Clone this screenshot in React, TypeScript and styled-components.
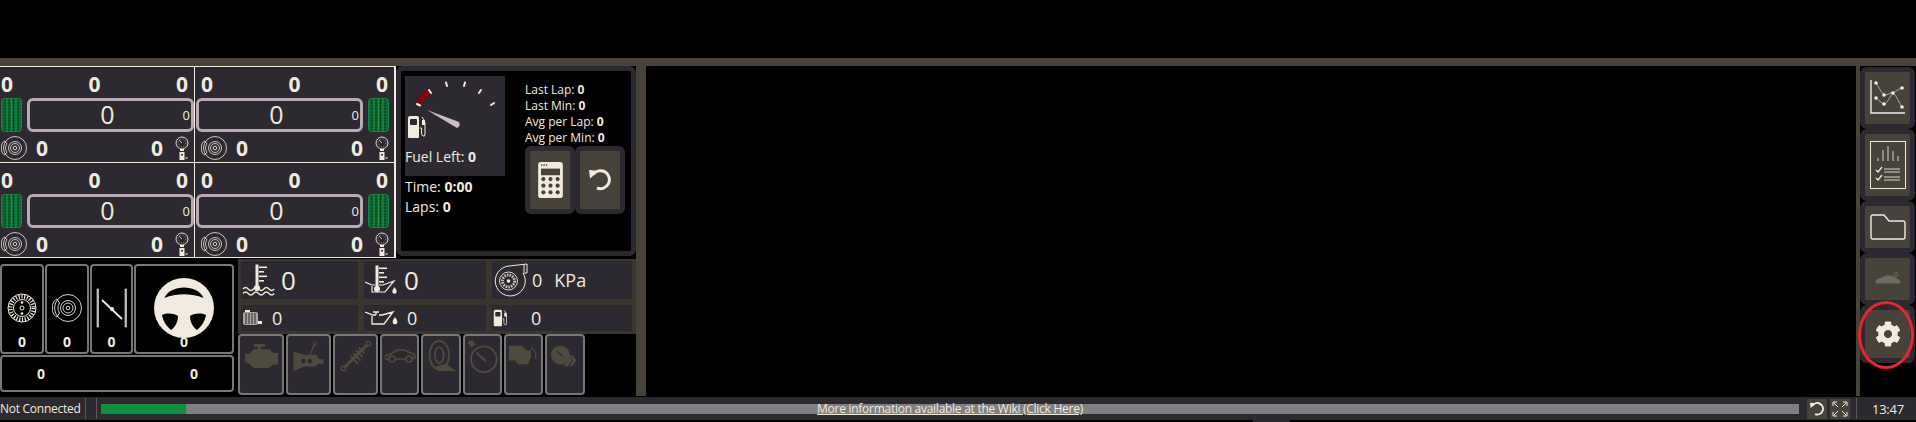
import React from "react";
import styled, { createGlobalStyle } from "styled-components";
import { FaCog } from "react-icons/fa";

const cream = "#f0eadf";
const panel = "#2c2a30";
const khaki = "#47433a";
const dim = "#4f4a3e";

const GlobalStyle = createGlobalStyle`
  html, body { margin: 0; padding: 0; background: #000; overflow: hidden; }
  body { font-family: "Open Sans", "Noto Sans", sans-serif; color: ${cream}; }
`;

/* ---------- icons ---------- */

const Tyre = () => (
  <svg width="21" height="34" viewBox="0 0 21 34">
    <rect x="0.5" y="0.5" width="20" height="33" rx="3" fill="#0c6b32" stroke="#0f8a3e" />
    {[4, 8, 12.5, 17].map((x) => (
      <line key={x} x1={x} y1="1" x2={x} y2="33" stroke="#1d2a22" strokeWidth="1" strokeDasharray="2 1" />
    ))}
    {[6, 10.5, 15].map((x) => (
      <line key={x} x1={x} y1="1" x2={x} y2="33" stroke="#159447" strokeWidth="1" />
    ))}
  </svg>
);

const BrakeDisc = () => (
  <svg width="26" height="24" viewBox="0 0 26 24" fill="none" stroke={cream}>
    <circle cx="14" cy="12" r="11.5" strokeWidth="0.8" />
    <circle cx="14" cy="12" r="6.5" strokeWidth="0.8" />
    <circle cx="14" cy="12" r="4.5" strokeWidth="0.8" />
    <circle cx="14" cy="12" r="1.8" strokeWidth="0.9" />
    <path d="M4 5 C1 6 0 9 0.5 12 C0 15 1 18 4 19 L6 16 C4 14 4 10 6 8 Z" strokeWidth="0.8" />
  </svg>
);

const PressureGauge = () => (
  <svg width="14" height="24" viewBox="0 0 14 24" fill="none">
    <circle cx="7" cy="7" r="6" stroke={cream} strokeWidth="0.9" />
    <path d="M7 7 L4 4" stroke={cream} strokeWidth="0.8" />
    <circle cx="7" cy="7" r="4" stroke="#8d8980" strokeWidth="1" strokeDasharray="1 1" />
    <rect x="5" y="13" width="4" height="2" fill={cream} />
    <rect x="4.5" y="16" width="5" height="8" fill={cream} />
    <rect x="6" y="18" width="2" height="1.5" fill={panel} />
    <rect x="10.5" y="21" width="2" height="2" fill="#a9a59b" />
  </svg>
);

const FuelPump = ({ size = 1 }: { size?: number }) => (
  <svg width={20 * size} height={24 * size} viewBox="0 0 20 24">
    <path d="M1 3 Q1 1 3 1 H10 Q12 1 12 3 V22 Q12 23 11 23 H2 Q1 23 1 22 Z" fill={cream} />
    <rect x="3" y="4" width="7" height="6" rx="1" fill={panel} />
    <path d="M15 2 L17 5 L18 8 V19 Q18 22 16 21 Q14.5 20 14.5 18 V13 H12.5" fill="none" stroke={cream} strokeWidth="1" />
    <rect x="15" y="5" width="3" height="5" fill={cream} />
  </svg>
);

const FuelDial = () => (
  <svg width="100" height="71" viewBox="0 0 100 71">
    <path d="M13 27 A 36 36 0 0 1 25 15" fill="none" stroke="#8b0000" strokeWidth="5" />
    <g stroke={cream} strokeWidth="2" strokeLinecap="round">
      <line x1="12" y1="28" x2="15" y2="29.5" />
      <line x1="24" y1="14" x2="26" y2="17" />
      <line x1="41" y1="6.5" x2="42" y2="10" />
      <line x1="60" y1="6.5" x2="59" y2="10" />
      <line x1="76" y1="14" x2="74" y2="17" />
      <line x1="89" y1="27" x2="86" y2="29" />
    </g>
    <path d="M22 34 L54 46 Q56 50 52 52 Z" fill="#cdbdc7" />
    <g transform="translate(2 39)"><FuelPump /></g>
  </svg>
);

const Calculator = () => (
  <svg width="27" height="38" viewBox="0 0 28 40">
    <rect x="1" y="1" width="26" height="38" rx="3" fill={cream} />
    <rect x="4" y="8" width="20" height="7" fill={khaki} />
    {[4, 6.5, 9].map((x) => (
      <rect key={x} x={x} y="3.5" width="1.5" height="1.5" fill={khaki} />
    ))}
    {[19, 26, 33].map((y) =>
      [6.5, 14, 21.5].map((x) => <circle key={`${x}-${y}`} cx={x} cy={y} r="2.2" fill={khaki} />)
    )}
  </svg>
);

const Undo = ({ w = 22 }: { w?: number }) => (
  <svg width={w} height={w} viewBox="0 0 22 22" fill="none">
    <path d="M4 5.5 A 9 9 0 1 1 8 19" stroke={cream} strokeWidth="3" />
    <path d="M0 1 L10 2 L1 9.5 Z" fill={cream} />
  </svg>
);

const VentedDisc = () => (
  <svg width="30" height="30" viewBox="0 0 30 30" fill="none" stroke={cream}>
    <circle cx="15" cy="15" r="14" strokeWidth="1" />
    <circle cx="15" cy="15" r="11.5" strokeWidth="4" strokeDasharray="1.2 1.6" />
    <circle cx="15" cy="15" r="8.5" strokeWidth="1" />
    <circle cx="15" cy="15" r="2" strokeWidth="1" />
    <circle cx="15" cy="9.5" r="0.9" fill={cream} />
    <circle cx="15" cy="20.5" r="0.9" fill={cream} />
  </svg>
);

const CaliperDisc = () => (
  <svg width="30" height="30" viewBox="0 0 30 30" fill="none" stroke={cream}>
    <circle cx="16" cy="15" r="13.5" strokeWidth="0.9" />
    <circle cx="16" cy="15" r="7.5" strokeWidth="0.9" />
    <circle cx="16" cy="15" r="5" strokeWidth="0.9" />
    <circle cx="16" cy="15" r="1.8" strokeWidth="0.9" />
    <path d="M5 6 C1 8 0 12 0.5 15 C0 18 1 22 5 24 L7.5 20 C5.5 17 5.5 13 7.5 10 Z" strokeWidth="0.9" />
  </svg>
);

const Throttle = () => (
  <svg width="32" height="40" viewBox="0 0 32 40" fill="none" stroke={cream}>
    <rect x="1" y="1" width="1.6" height="38" fill="#a9a59b" strokeWidth="0.6" />
    <rect x="29" y="1" width="1.6" height="38" fill="#a9a59b" strokeWidth="0.6" />
    <path d="M6 12 L26 31" strokeWidth="1.8" />
    <circle cx="16" cy="21" r="2" fill={cream} strokeWidth="0" />
  </svg>
);

const SteeringWheel = () => (
  <svg width="60" height="60" viewBox="0 0 60 60">
    <circle cx="30" cy="30" r="30" fill={cream} />
    <path d="M10.5 20 C16 6 44 6 49.5 20 C38 15 22 15 10.5 20 Z" fill="#000" />
    <path d="M8 37 C14 34 21 36 24 38 C24 45 20 50 17 52 C12 48 9 43 8 37 Z" fill="#000" />
    <path d="M52 37 C46 34 39 36 36 38 C36 45 40 50 43 52 C48 48 51 43 52 37 Z" fill="#000" />
  </svg>
);

const Waves = ({ y }: { y: number }) => (
  <>
    {[0, 4.5].map((d) => (
      <path
        key={d}
        d={`M1 ${y + d} q2.5 -3 5.2 0 t5.2 0 t5.2 0 t5.2 0 t5.2 0 t5.2 0`}
        fill="none"
        stroke={cream}
        strokeWidth="1.4"
      />
    ))}
  </>
);

const Thermo = ({ x }: { x: number }) => (
  <g>
    <rect x={x - 1.5} y="0.5" width="3" height="22" fill={cream} />
    <circle cx={x} cy="24" r="3" fill={cream} />
    {[2.5, 7, 11.5, 16].map((y, i) => (
      <rect key={y} x={x + 2} y={y} width={i % 2 ? 5 : 8} height="1.6" fill={cream} />
    ))}
  </g>
);

const WaterTemp = () => (
  <svg width="33" height="33" viewBox="0 0 33 33">
    <Thermo x={15} />
    <Waves y={25} />
  </svg>
);

const OilTemp = () => (
  <svg width="33" height="30" viewBox="0 0 33 30">
    <Thermo x={12} />
    <path
      d="M0 17 L7 20 H10 M14 20 H18 L29 16 L20 27 H7 V21"
      fill="none"
      stroke={cream}
      strokeWidth="1.2"
    />
    <path d="M29.5 22 q2.2 3 2.2 4.5 a2.2 2.2 0 0 1 -4.4 0 q0 -1.5 2.2 -4.5 Z" fill={cream} />
  </svg>
);

const Turbo = () => (
  <svg width="36" height="34" viewBox="0 0 36 34" fill="none" stroke={cream}>
    <path d="M34 1 V10 H30 A15 15 0 1 1 16 3 Z" strokeWidth="1" />
    <path d="M31 1.5 V9" strokeWidth="1" />
    <circle cx="15.5" cy="18" r="9" strokeWidth="0.9" />
    <circle cx="15.5" cy="18" r="6" strokeWidth="2.8" strokeDasharray="1.6 1" stroke="#c7c2b7" />
    <circle cx="15.5" cy="18" r="1.8" fill={cream} strokeWidth="0" />
  </svg>
);

const Radiator = () => (
  <svg width="21" height="18" viewBox="0 0 21 18">
    <rect x="1" y="3" width="15" height="13" rx="2" fill="#a9a59b" />
    {[3.5, 6.5, 9.5, 12.5].map((x) => (
      <rect key={x} x={x} y="4" width="1" height="11" fill={panel} />
    ))}
    <rect x="3" y="1" width="5" height="2" fill={cream} />
    <path d="M16 12 H20 V15 H16 Z" fill={cream} />
  </svg>
);

const OilCan = () => (
  <svg width="33" height="16" viewBox="0 0 33 16">
    <path
      d="M0 2 L8 5 H11 M11 5 V2 M8 2 H14 M14 5 H17 L28 2 L19 14 H7 V6"
      fill="none"
      stroke={cream}
      strokeWidth="1.3"
    />
    <path d="M30 7 q2.4 3.2 2.4 5 a2.4 2.4 0 0 1 -4.8 0 q0 -1.8 2.4 -5 Z" fill={cream} />
  </svg>
);

const icons = [
  <svg key="engine" width="33" height="25" viewBox="0 0 33 28" preserveAspectRatio="none">
    <path d="M9 0 H20 V3 H16 V6 H25 L28 10 H33 V23 H28 L24 27 H9 L3 21 H0 V11 H4 L9 6 H13 V3 H9 Z" fill={dim} />
  </svg>,
  <svg key="gearbox" width="33" height="31" viewBox="0 0 33 34">
    <path d="M0 12 L12 15 H25 L28 20 H33 V25 H28 L24 28 H12 L0 33 Z" fill={dim} />
    <path d="M18 15 L23 4" stroke={dim} strokeWidth="1.5" />
    <circle cx="24" cy="2.5" r="2" fill="none" stroke={dim} />
    <circle cx="11" cy="22" r="2.6" fill={panel} />
    <circle cx="18" cy="22" r="2.6" fill={panel} />
  </svg>,
  <svg key="shock" width="32" height="32" viewBox="0 0 34 34" stroke={dim} fill="none">
    <path d="M5 29 L29 5" strokeWidth="3" />
    <path d="M11 17 L19 25 M14 14 L22 22 M17 11 L24 18 M20 8 L26 14" strokeWidth="2" />
    <circle cx="4" cy="30" r="2.5" strokeWidth="1.5" />
    <circle cx="30" cy="4" r="2.5" strokeWidth="1.5" />
  </svg>,
  <svg key="car" width="32" height="14" viewBox="0 0 32 14" fill="none" stroke={dim}>
    <path d="M1 8 Q1 6 7 5 L13 1 H20 L29 5 Q32 6 31 9 H28 M22 10 H11 M5 10 H1" strokeWidth="1.6" />
    <circle cx="8" cy="10" r="3" strokeWidth="1.5" />
    <circle cx="25" cy="10" r="3" strokeWidth="1.5" />
  </svg>,
  <svg key="tyre" width="33" height="32" viewBox="0 0 33 36" fill="none" stroke={dim}>
    <ellipse cx="14" cy="17" rx="11" ry="16" strokeWidth="2" />
    <ellipse cx="14" cy="17" rx="5" ry="9" strokeWidth="2" />
    <path d="M7 31 Q18 27 22 27 L33 35 H14 Z" fill={dim} stroke="none" />
  </svg>,
  <svg key="timer" width="31" height="33" viewBox="0 0 33 36" fill="none" stroke={dim}>
    <circle cx="18" cy="21" r="14" strokeWidth="2" />
    <path d="M10 14 L20 23" strokeWidth="2.5" />
    <path d="M0 3 L5 0 L9 5 L5 8 Z" fill={dim} stroke="none" />
  </svg>,
  <svg key="turn" width="32" height="24" viewBox="0 0 33 26">
    <path d="M0 2 H14 L19 7 H24 V14 L21 22 H10 L7 18 H0 Z" fill={dim} />
    <path d="M24 4 Q31 8 29 16" fill="none" stroke={dim} strokeWidth="1.3" />
  </svg>,
  <svg key="boost" width="32" height="22" viewBox="0 0 33 26">
    <circle cx="11" cy="12" r="11" fill={dim} />
    <path d="M7 7 L14 14" stroke={panel} strokeWidth="1.5" />
    <path d="M15 12 H20 L25 18 L20 25 H15 L19 18 Z M21 12 H25 L30 18 L25 25 H22 L26 18 Z" fill={dim} />
  </svg>,
];

/* ---------- layout ---------- */

const Page = styled.div`
  width: 1916px;
  height: 422px;
  background: #000;
  display: flex;
  flex-direction: column;
  overflow: hidden;
`;

const TopSpace = styled.div`
  height: 58px;
  flex: none;
`;

const Divider = styled.div`
  height: 8px;
  flex: none;
  background: ${khaki};
`;

const Body = styled.div`
  height: 330px;
  flex: none;
  display: flex;
`;

const LeftColumn = styled.div`
  width: 636px;
  flex: none;
  display: flex;
  flex-direction: column;
`;

const TopPanels = styled.div`
  display: flex;
  height: 192px;
  flex: none;
`;

const WheelGrid = styled.div`
  width: 396px;
  flex: none;
  display: grid;
  grid-template-columns: 195px 200px;
  grid-template-rows: 96px 96px;
  overflow: hidden;
  background: ${cream};
  border-right: 1px solid ${cream};
  box-sizing: border-box;
`;

const WheelCell = styled.div`
  background: ${panel};
  border-top: 1px solid ${cream};
  border-right: 1px solid ${cream};
  box-sizing: border-box;
  display: flex;
  flex-direction: column;
  width: 200px;
  &:nth-child(odd) {
    margin-left: -5px;
  }
  &:nth-child(even) {
    border-right: none;
    width: 199px;
  }
  &:nth-child(n + 3) {
    border-bottom: 1px solid ${cream};
  }
`;

const BigRow = styled.div`
  height: 31px;
  flex: none;
  display: flex;
  justify-content: space-between;
  align-items: flex-start;
  padding: 0 6px;
  font-size: 21px;
  font-weight: 700;
  line-height: 34px;
`;

const MidRow = styled.div<{ $mirror?: boolean }>`
  display: flex;
  flex-direction: ${(p) => (p.$mirror ? "row-reverse" : "row")};
  align-items: center;
  padding: ${(p) => (p.$mirror ? "0 5px 0 1px" : "0 0 0 6px")};
  gap: 5px;
  height: 34px;
  flex: none;
`;

const TempBar = styled.div`
  flex: 1;
  height: 34px;
  box-sizing: border-box;
  border: 3px solid #b9a9b5;
  border-radius: 6px;
  position: relative;
  font-size: 25px;
  line-height: 27px;
  text-align: center;
  padding-right: 6px;
`;

const SmallValue = styled.span`
  position: absolute;
  right: 1px;
  top: 0;
  font-size: 13px;
  line-height: 28px;
`;

const BrakeRow = styled.div`
  display: flex;
  align-items: center;
  height: 26px;
  flex: none;
  margin-top: 3px;
  padding: 0 5px 0 6px;
  font-size: 21px;
  font-weight: 700;
  line-height: 26px;
`;

const BrakeValue = styled.span<{ $width: number }>`
  width: ${(p) => p.$width}px;
  text-align: center;
  flex: none;
  margin-right: auto;
  &:first-of-type {
    margin-left: 8px;
  }
  &:last-of-type {
    margin-right: 11px;
  }
`;

const FuelPanel = styled.div`
  flex: 1;
  border: 5px solid ${panel};
  border-radius: 7px;
  margin-bottom: 2px;
  box-sizing: border-box;
  display: flex;
  padding: 5px 5px 0 4px;
  gap: 20px;
`;

const FuelLeftColumn = styled.div`
  width: 100px;
  flex: none;
`;

const FuelGauge = styled.div`
  width: 100px;
  height: 100px;
  background: ${panel};
  font-size: 14px;
  line-height: 20px;
  svg {
    display: block;
  }
`;

const Info = styled.div`
  font-size: 14px;
  line-height: 20px;
  margin-top: 1px;
`;

const FuelRightColumn = styled.div`
  flex: 1;
  font-size: 12px;
  line-height: 16px;
  padding-top: 6px;
`;

const FuelButtons = styled.div`
  display: flex;
`;

const FuelButton = styled.div`
  width: 50px;
  height: 68px;
  box-sizing: border-box;
  border: 5px solid ${panel};
  border-radius: 6px;
  background: ${khaki};
  display: flex;
  align-items: center;
  justify-content: center;
`;

const BottomPanels = styled.div`
  flex: 1;
  min-height: 0;
  display: flex;
  gap: 4px;
  padding-top: 1px;
`;

const Pedals = styled.div`
  width: 234px;
  flex: none;
  display: flex;
  flex-direction: column;
  gap: 1px;
  padding-top: 5px;
`;

const PedalRow = styled.div`
  display: flex;
  height: 90px;
  flex: none;
  gap: 1px;
`;

const PedalCard = styled.div<{ $width: number }>`
  width: ${(p) => p.$width}px;
  flex: none;
  box-sizing: border-box;
  border: 2px solid #777;
  border-radius: 4px;
  display: flex;
  flex-direction: column;
  align-items: center;
  justify-content: flex-end;
  font-size: 14px;
  font-weight: 700;
  line-height: 18px;
  padding-bottom: 1px;
`;

const PedalIcon = styled.div`
  flex: 1;
  display: flex;
  align-items: center;
  justify-content: center;
  padding-top: 10px;
  margin-bottom: -6px;
`;

const SumCard = styled.div`
  height: 37px;
  flex: none;
  box-sizing: border-box;
  border: 2px solid #777;
  border-radius: 4px;
  display: flex;
  align-items: center;
  font-size: 14px;
  font-weight: 700;
`;

const SumValue = styled.span<{ $width: number }>`
  width: ${(p) => p.$width}px;
  flex: none;
  text-align: center;
`;

const Readouts = styled.div`
  flex: 1;
  display: flex;
  flex-direction: column;
`;

const ReadoutGrid = styled.div`
  display: grid;
  grid-template-columns: 123px 128px 146px;
  grid-template-rows: 38px 26px;
  row-gap: 6px;
  background: #38362f;
  padding: 2px 0 3px;
  height: 75px;
  flex: none;
  box-sizing: border-box;
`;

const Readout = styled.div<{ $big?: boolean }>`
  background: ${panel};
  margin: 0 3px;
  display: flex;
  align-items: center;
  font-size: ${(p) => (p.$big ? 26 : 18)}px;
  gap: ${(p) => (p.$big ? 6 : 9)}px;
  padding-left: 1px;
  min-width: 0;
`;

const Kpa = styled.span`
  font-size: 18px;
  display: flex;
  gap: 12px;
  margin-left: -6px;
`;

const FuelValue = styled.span`
  margin-left: 14px;
`;

const FaultButtons = styled.div`
  display: flex;
  gap: 2px;
`;

const FaultButton = styled.div<{ $width: number }>`
  width: ${(p) => p.$width}px;
  height: 61px;
  flex: none;
  box-sizing: border-box;
  background: ${panel};
  border: 2px solid #777;
  border-radius: 4px;
  display: flex;
  justify-content: center;
  align-items: center;
  padding-bottom: 17px;
`;

const VLine = styled.div`
  width: 10px;
  flex: none;
  background: ${khaki};
`;

const MainArea = styled.div`
  flex: 1;
  background: #000;
`;

const SideLine = styled.div`
  width: 4px;
  flex: none;
  background: ${khaki};
`;

const SideBar = styled.div`
  width: 56px;
  flex: none;
  display: flex;
  flex-direction: column;
  align-items: stretch;
  padding-top: 1px;
  padding-right: 1px;
  box-sizing: border-box;
  position: relative;
`;

const SideButton = styled.div<{ $height: number }>`
  height: ${(p) => p.$height}px;
  flex: none;
  box-sizing: border-box;
  border: 5px solid ${panel};
  border-radius: 7px;
  background: ${khaki};
  display: flex;
  align-items: center;
  justify-content: center;
  color: ${cream};
`;

const RedRing = styled.div`
  position: absolute;
  left: -2px;
  top: 235px;
  width: 56px;
  height: 68px;
  box-sizing: border-box;
  border: 3.5px solid #e8262d;
  border-radius: 50%;
  pointer-events: none;
`;

const StatusBar = styled.div`
  height: 23px;
  flex: none;
  margin-top: 1px;
  background: ${panel};
  display: flex;
  align-items: center;
  font-size: 12px;
  letter-spacing: -0.27px;
`;

const Connection = styled.span`
  width: 85px;
  flex: none;
`;

const Separator = styled.div<{ $gap: number }>`
  width: 1px;
  height: 21px;
  background: #5a5a5c;
  flex: none;
  margin-right: ${(p) => p.$gap}px;
`;

const Progress = styled.div`
  width: 1698px;
  height: 10px;
  flex: none;
  margin-left: 4px;
  background: #808080;
  position: relative;
  display: flex;
  align-items: center;
  justify-content: center;
`;

const ProgressFill = styled.div<{ $width: number }>`
  position: absolute;
  left: 0;
  top: 0;
  bottom: 0;
  width: ${(p) => p.$width}px;
  background: #0f9040;
`;

const WikiLink = styled.a`
  position: relative;
  color: ${cream};
  text-decoration: underline;
  font-size: 12px;
  line-height: 10px;
`;

const WindowButton = styled.div`
  width: 20px;
  height: 20px;
  background: ${khaki};
  flex: none;
  display: flex;
  align-items: center;
  justify-content: center;
`;

const WindowButtons = styled.div`
  display: flex;
  gap: 3px;
  margin: 0 6px 0 8px;
  flex: none;
`;

const Clock = styled.span`
  font-size: 13px;
  margin-left: 15px;
`;

const BottomStrip = styled.div`
  height: 2px;
  flex: none;
  background: #000;
`;

const StripTab = styled.div`
  width: 37px;
  height: 100%;
  margin-left: 1253px;
  background: ${panel};
`;

const wheels = [false, true, false, true];
const faultWidths = [46, 45, 45, 39, 40, 39, 39, 40];
const chartPoints = [
  [6, 3], [14, 15], [23, 13], [32, 27], [6, 18], [14, 24], [32, 8],
];

export default function App() {
  return (
    <Page>
      <GlobalStyle />
      <TopSpace />
      <Divider />
      <Body>
        <LeftColumn>
          <TopPanels>
            <WheelGrid>
              {wheels.map((mirror, i) => (
                <WheelCell key={i}>
                  <BigRow>
                    <span>0</span>
                    <span>0</span>
                    <span>0</span>
                  </BigRow>
                  <MidRow $mirror={mirror}>
                    <Tyre />
                    <TempBar>
                      0<SmallValue>0</SmallValue>
                    </TempBar>
                  </MidRow>
                  <BrakeRow>
                    <BrakeDisc />
                    <BrakeValue $width={14}>0</BrakeValue>
                    <BrakeValue $width={14}>0</BrakeValue>
                    <PressureGauge />
                  </BrakeRow>
                </WheelCell>
              ))}
            </WheelGrid>
            <FuelPanel>
              <FuelLeftColumn>
                <FuelGauge>
                  <FuelDial />
                  Fuel Left: <b>0</b>
                </FuelGauge>
                <Info>
                  Time: <b>0:00</b>
                  <br />
                  Laps: <b>0</b>
                </Info>
              </FuelLeftColumn>
              <FuelRightColumn>
                Last Lap: <b>0</b>
                <br />
                Last Min: <b>0</b>
                <br />
                Avg per Lap: <b>0</b>
                <br />
                Avg per Min: <b>0</b>
                <FuelButtons>
                  <FuelButton>
                    <Calculator />
                  </FuelButton>
                  <FuelButton>
                    <Undo />
                  </FuelButton>
                </FuelButtons>
              </FuelRightColumn>
            </FuelPanel>
          </TopPanels>
          <BottomPanels>
            <Pedals>
              <PedalRow>
                <PedalCard $width={44}>
                  <PedalIcon>
                    <VentedDisc />
                  </PedalIcon>
                  0
                </PedalCard>
                <PedalCard $width={44}>
                  <PedalIcon>
                    <CaliperDisc />
                  </PedalIcon>
                  0
                </PedalCard>
                <PedalCard $width={43}>
                  <PedalIcon>
                    <Throttle />
                  </PedalIcon>
                  0
                </PedalCard>
                <PedalCard $width={100}>
                  <PedalIcon>
                    <SteeringWheel />
                  </PedalIcon>
                  0
                </PedalCard>
              </PedalRow>
              <SumCard>
                <SumValue $width={78}>0</SumValue>
                <SumValue $width={228}>0</SumValue>
              </SumCard>
            </Pedals>
            <Readouts>
              <ReadoutGrid>
                <Readout $big>
                  <WaterTemp />0
                </Readout>
                <Readout $big>
                  <OilTemp />0
                </Readout>
                <Readout>
                  <Turbo />
                  <Kpa>
                    <span>0</span>
                    <span>KPa</span>
                  </Kpa>
                </Readout>
                <Readout>
                  <Radiator />0
                </Readout>
                <Readout>
                  <OilCan />0
                </Readout>
                <Readout>
                  <FuelPump size={0.75} />
                  <FuelValue>0</FuelValue>
                </Readout>
              </ReadoutGrid>
              <FaultButtons>
                {icons.map((icon, i) => (
                  <FaultButton key={i} $width={faultWidths[i]}>
                    {icon}
                  </FaultButton>
                ))}
              </FaultButtons>
            </Readouts>
          </BottomPanels>
        </LeftColumn>
        <VLine />
        <MainArea />
        <SideLine />
        <SideBar>
          <SideButton $height={62}>
            <svg width="36" height="36" viewBox="0 0 36 36" fill="none" stroke={cream}>
              <path d="M1 0 V33 H35" strokeWidth="1.4" />
              <path d="M6 3 C9 8 11 12 14 15 C17 16 20 12 23 13 C27 16 29 23 32 27" strokeWidth="0.9" stroke="#b8b3a8" />
              <path d="M6 18 C9 20 11 23 14 24 C17 24 20 16 23 13 C26 11 29 9 32 8" strokeWidth="0.9" stroke="#b8b3a8" />
              {chartPoints.map(([x, y]) => (
                <circle key={`${x}-${y}`} cx={x} cy={y} r="1.8" fill={cream} stroke="none" />
              ))}
            </svg>
          </SideButton>
          <SideButton $height={72}>
            <svg width="36" height="48" viewBox="0 0 36 48" fill="none">
              <rect x="0.5" y="0.5" width="35" height="47" stroke={cream} />
              <g stroke="#a9a59b" strokeWidth="1.5">
                <path d="M8 20 V17 M13 20 V9 M18 20 V5 M23 20 V10 M28 20 V15" />
                <path d="M14 28 H30 M14 31 H30 M14 36 H30 M14 39 H30" />
              </g>
              <path d="M6 29 L8 31 L12 26 M6 37 L8 39 L12 34" stroke={cream} strokeWidth="1.3" />
            </svg>
          </SideButton>
          <SideButton $height={52}>
            <svg width="36" height="26" viewBox="0 0 36 26" fill="none">
              <path d="M1 3 Q1 1 3 1 H14 L19 7 H33 Q35 7 35 9 V23 Q35 25 33 25 H3 Q1 25 1 23 Z" stroke={cream} strokeWidth="1.4" />
            </svg>
          </SideButton>
          <SideButton $height={52}>
            <svg width="26" height="14" viewBox="0 0 26 14" fill="none" stroke="#6f6b60">
              <path d="M1 9 Q1 7 6 6.5 L11 4 H16 L22 7 Q25 8 25 11 H1 Z" fill="#6f6b60" />
              <circle cx="21" cy="2.5" r="2" strokeWidth="1" />
            </svg>
          </SideButton>
          <SideButton $height={58}>
            <FaCog size={26} />
          </SideButton>
          <RedRing />
        </SideBar>
      </Body>
      <StatusBar>
        <Connection>Not Connected</Connection>
        <Separator $gap={10} />
        <Separator $gap={0} />
        <Progress>
          <ProgressFill $width={85} />
          <WikiLink>More information available at the Wiki (Click Here)</WikiLink>
        </Progress>
        <WindowButtons>
          <WindowButton>
            <Undo w={14} />
          </WindowButton>
          <WindowButton>
            <svg width="16" height="16" viewBox="0 0 16 16" fill="none" stroke={cream} strokeWidth="1">
              <path d="M1 5 V1 H5 M11 1 H15 V5 M1 11 V15 H5 M15 11 V15 H11 M2 2 L6 6 M14 2 L10 6 M2 14 L6 10 M14 14 L10 10" />
            </svg>
          </WindowButton>
        </WindowButtons>
        <Separator $gap={0} />
        <Clock>13:47</Clock>
      </StatusBar>
      <BottomStrip>
        <StripTab />
      </BottomStrip>
    </Page>
  );
}
